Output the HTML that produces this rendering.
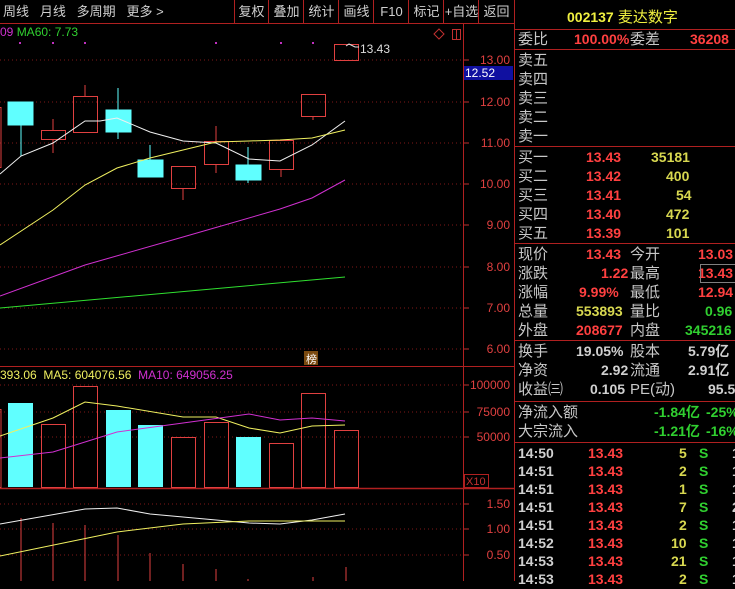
<!DOCTYPE html>
<html><head><meta charset="utf-8"><style>
*{margin:0;padding:0;box-sizing:border-box}
body{width:735px;height:581px;background:#000;overflow:hidden;position:relative;font-family:"Liberation Sans","Noto Sans CJK SC",sans-serif;color:#c0c0c0}
.a{position:absolute;white-space:nowrap}
.tb{position:absolute;top:0;height:23px;font-size:13px;color:#d0d0d0;line-height:23px}
.rp{position:absolute;left:514px;top:0;width:221px;height:581px;border-left:1px solid #b02020}
.hl{position:absolute;left:0;width:221px;height:1px;background:#b02020}
.r{position:absolute;left:3px;font-size:15px;line-height:19px;height:19px;width:218px}
.r span{position:absolute;top:0}
.lab{color:#c8c8c8}
.red{color:#ff4040}.yel{color:#d8d850}.grn{color:#30d030}.wht{color:#d0d0d0}
.n{font-weight:bold;font-size:14px}
</style></head><body>
<div class="tb" style="left:3px;width:230px;word-spacing:0">周线&nbsp;&nbsp; 月线&nbsp;&nbsp; 多周期&nbsp;&nbsp; 更多 &gt;</div>
<svg class="a" style="left:0;top:0" width="515" height="581">
<line x1="0" y1="23.5" x2="514" y2="23.5" stroke="#b02020"/>
<g stroke="#b02020"><line x1="234.5" y1="0" x2="234.5" y2="23"/><line x1="268.5" y1="0" x2="268.5" y2="23"/><line x1="303.5" y1="0" x2="303.5" y2="23"/><line x1="338.5" y1="0" x2="338.5" y2="23"/><line x1="373.5" y1="0" x2="373.5" y2="23"/><line x1="408.5" y1="0" x2="408.5" y2="23"/><line x1="443.5" y1="0" x2="443.5" y2="23"/><line x1="478.5" y1="0" x2="478.5" y2="23"/></g>
<line x1="463.5" y1="24" x2="463.5" y2="581" stroke="#b02020"/>
<line x1="0" y1="366.5" x2="514" y2="366.5" stroke="#b02020"/>
<line x1="0" y1="488.5" x2="514" y2="488.5" stroke="#b02020" stroke-width="1.5"/>
<g stroke="#801818" stroke-dasharray="1,3">
<line x1="0" y1="60" x2="463" y2="60"/><line x1="0" y1="102" x2="463" y2="102"/><line x1="0" y1="143" x2="463" y2="143"/><line x1="0" y1="184" x2="463" y2="184"/><line x1="0" y1="225" x2="463" y2="225"/><line x1="0" y1="267" x2="463" y2="267"/><line x1="0" y1="308" x2="463" y2="308"/><line x1="0" y1="349" x2="463" y2="349"/>
<line x1="0" y1="385" x2="463" y2="385"/><line x1="0" y1="412" x2="463" y2="412"/><line x1="0" y1="437" x2="463" y2="437"/>
<line x1="0" y1="504" x2="463" y2="504"/><line x1="0" y1="529" x2="463" y2="529"/><line x1="0" y1="555" x2="463" y2="555"/>
</g>
<g stroke="#c03030"><line x1="464" y1="60" x2="469" y2="60"/><line x1="464" y1="102" x2="469" y2="102"/><line x1="464" y1="143" x2="469" y2="143"/><line x1="464" y1="184" x2="469" y2="184"/><line x1="464" y1="225" x2="469" y2="225"/><line x1="464" y1="267" x2="469" y2="267"/><line x1="464" y1="308" x2="469" y2="308"/><line x1="464" y1="349" x2="469" y2="349"/><line x1="464" y1="385" x2="469" y2="385"/><line x1="464" y1="412" x2="469" y2="412"/><line x1="464" y1="437" x2="469" y2="437"/><line x1="464" y1="504" x2="469" y2="504"/><line x1="464" y1="529" x2="469" y2="529"/><line x1="464" y1="555" x2="469" y2="555"/></g>
<rect x="464" y="66" width="49" height="14" fill="#1010a0"/>
<g fill="#c030c0"><rect x="19" y="42" width="2" height="2"/><rect x="52" y="42" width="2" height="2"/><rect x="84" y="42" width="2" height="2"/><rect x="215" y="42" width="2" height="2"/><rect x="280" y="42" width="2" height="2"/><rect x="312" y="42" width="2" height="2"/></g>
<path d="M434 34 L439 29 L444 34 L439 39 Z" fill="none" stroke="#c03030"/>
<rect x="452.5" y="29.5" width="8" height="10" fill="none" stroke="#c03030"/><line x1="456.5" y1="30" x2="456.5" y2="39" stroke="#c03030"/>
<g stroke="#e04040" fill="none">
<rect x="-5" y="107.5" width="6" height="60"/>
<line x1="53" y1="119" x2="53" y2="130"/><line x1="53" y1="139" x2="53" y2="153"/><rect x="41.5" y="130.5" width="24" height="9"/>
<line x1="85" y1="85" x2="85" y2="96"/><rect x="73.5" y="96.5" width="24" height="36"/>
<rect x="171.5" y="166.5" width="24" height="22"/><line x1="183" y1="189" x2="183" y2="200"/>
<line x1="216" y1="126" x2="216" y2="141"/><rect x="204.5" y="141.5" width="24" height="23"/><line x1="216" y1="165" x2="216" y2="173"/>
<rect x="269.5" y="140.5" width="24" height="29"/><line x1="281" y1="170" x2="281" y2="177"/>
<rect x="301.5" y="94.5" width="24" height="22"/><line x1="313" y1="117" x2="313" y2="120"/>
<rect x="334.5" y="44.5" width="24" height="16"/>
</g>
<g fill="#60ffff" stroke="#60ffff">
<line x1="21" y1="125" x2="21" y2="156"/><rect x="8" y="102" width="25" height="23"/>
<line x1="118" y1="88" x2="118" y2="139"/><rect x="106" y="110" width="25" height="22"/>
<line x1="150" y1="145" x2="150" y2="160"/><rect x="138" y="160" width="25" height="17"/>
<line x1="248" y1="147" x2="248" y2="183"/><rect x="236" y="165" width="25" height="15"/>
</g>
<path d="M346 46 L349 44 L355 47 L359 47" stroke="#ddd" fill="none"/>
<polyline points="0,174 21,156 53,143 85,121 100,121 117,118 150,132 183,141 216,143 249,159 280,161 312,145 345,121" fill="none" stroke="#f0f0f0"/>
<polyline points="0,245 53,210 85,185 117,168 150,158 183,150 216,142 249,141 280,140 312,138 345,130" fill="none" stroke="#f0f060"/>
<polyline points="0,296 85,265 183,237 280,209 312,198 345,180" fill="none" stroke="#d030d0"/>
<polyline points="0,308 345,277" fill="none" stroke="#30e030"/>
<rect x="304" y="351" width="14" height="14" fill="#7a4a10"/>
<g fill="#60ffff"><rect x="8" y="403" width="25" height="84"/><rect x="106" y="410" width="25" height="77"/><rect x="138" y="425" width="25" height="62"/><rect x="236" y="437" width="25" height="50"/></g>
<g fill="none" stroke="#e04040"><rect x="-5" y="409.5" width="6" height="78"/><rect x="41.5" y="424.5" width="24" height="63"/><rect x="73.5" y="386.5" width="24" height="101"/><rect x="171.5" y="437.5" width="24" height="50"/><rect x="204.5" y="422.5" width="24" height="65"/><rect x="269.5" y="443.5" width="24" height="44"/><rect x="301.5" y="393.5" width="24" height="94"/><rect x="334.5" y="430.5" width="24" height="57"/></g>
<polyline points="0,436 53,418 85,402 117,406 183,417 216,417 249,428 280,433 312,426 345,425" fill="none" stroke="#f0f060"/>
<polyline points="0,458 53,452 117,432 183,423 249,414 280,420 312,418 345,421" fill="none" stroke="#d030d0"/>
<rect x="464.5" y="474.5" width="24" height="13" fill="none" stroke="#b02020"/>
<g stroke="#e04040"><line x1="21" y1="518" x2="21" y2="581"/><line x1="53" y1="523" x2="53" y2="581"/><line x1="85" y1="525" x2="85" y2="581"/><line x1="118" y1="535" x2="118" y2="581"/><line x1="150" y1="553" x2="150" y2="581"/><line x1="183" y1="564" x2="183" y2="581"/><line x1="216" y1="569" x2="216" y2="581"/><line x1="248" y1="579" x2="248" y2="581"/><line x1="313" y1="577" x2="313" y2="581"/><line x1="346" y1="567" x2="346" y2="581"/></g>
<polyline points="0,524 85,509 117,508 150,514 183,517 249,523 280,524 312,520 345,514" fill="none" stroke="#f0f0f0"/>
<polyline points="0,556 117,532 183,524 249,521 345,521" fill="none" stroke="#f0f060"/>
</svg>
<div class="tb" style="left:234px;width:35px;text-align:center">复权</div>
<div class="tb" style="left:269px;width:35px;text-align:center">叠加</div>
<div class="tb" style="left:304px;width:35px;text-align:center">统计</div>
<div class="tb" style="left:339px;width:35px;text-align:center">画线</div>
<div class="tb" style="left:374px;width:35px;text-align:center">F10</div>
<div class="tb" style="left:409px;width:35px;text-align:center">标记</div>
<div class="tb" style="left:444px;width:35px;text-align:center">+自选</div>
<div class="tb" style="left:479px;width:35px;text-align:center">返回</div>
<div class="a" style="left:0;top:25px;font-size:12px;color:#d030d0">09 <span style="color:#30d030">MA60: 7.73</span></div>
<div class="a" style="left:360px;top:42px;font-size:12px;color:#ddd">13.43</div>
<div class="a" style="left:306px;top:351px;font-size:11px;color:#fff">榜</div>
<div class="a" style="left:0;top:368px;font-size:12px;color:#f0f060">393.06&nbsp; MA5: 604076.56&nbsp; <span style="color:#d030d0">MA10: 649056.25</span></div>
<div class="a" style="left:466px;top:476px;font-size:11px;color:#c03030">X10</div>
<div class="a" style="left:465px;top:66px;font-size:12px;color:#fff">12.52</div>
<div class="a" style="left:470px;top:0;width:40px;text-align:right;font-size:12px;color:#e04040;line-height:14px">
<div style="position:absolute;right:0;top:53px">13.00</div>
<div style="position:absolute;right:0;top:95px">12.00</div><div style="position:absolute;right:0;top:136px">11.00</div><div style="position:absolute;right:0;top:177px">10.00</div><div style="position:absolute;right:0;top:218px">9.00</div><div style="position:absolute;right:0;top:260px">8.00</div><div style="position:absolute;right:0;top:301px">7.00</div><div style="position:absolute;right:0;top:342px">6.00</div>
<div style="position:absolute;right:0;top:378px">100000</div><div style="position:absolute;right:0;top:405px">75000</div><div style="position:absolute;right:0;top:430px">50000</div>
<div style="position:absolute;right:0;top:497px">1.50</div><div style="position:absolute;right:0;top:522px">1.00</div><div style="position:absolute;right:0;top:548px">0.50</div>
</div>
<div class="rp">
<div class="a" style="left:52px;top:6px;font-size:15px;color:#f0f040"><b style="font-size:14px">002137</b> 麦达数字</div>
<div class="hl" style="top:29px"></div>
<div class="r" style="top:30px"><span class="lab" style="left:0">委比</span><span class="red n" style="left:56px">100.00%</span><span class="lab" style="left:112px">委差</span><span class="red n" style="left:172px">36208</span></div>
<div class="hl" style="top:49px"></div>
<div class="r lab" style="top:51px">卖五</div><div class="r lab" style="top:70px">卖四</div><div class="r lab" style="top:89px">卖三</div><div class="r lab" style="top:108px">卖二</div><div class="r lab" style="top:127px">卖一</div>
<div class="hl" style="top:146px"></div>
<div class="r" style="top:148px"><span class="lab">买一</span><span class="red n" style="left:68px">13.43</span><span class="yel n" style="left:133px">35181</span></div>
<div class="r" style="top:167px"><span class="lab">买二</span><span class="red n" style="left:68px">13.42</span><span class="yel n" style="left:148px">400</span></div>
<div class="r" style="top:186px"><span class="lab">买三</span><span class="red n" style="left:68px">13.41</span><span class="yel n" style="left:158px">54</span></div>
<div class="r" style="top:205px"><span class="lab">买四</span><span class="red n" style="left:68px">13.40</span><span class="yel n" style="left:148px">472</span></div>
<div class="r" style="top:224px"><span class="lab">买五</span><span class="red n" style="left:68px">13.39</span><span class="yel n" style="left:148px">101</span></div>
<div class="hl" style="top:243px"></div>
<div class="r" style="top:245px"><span class="lab">现价</span><span class="red n" style="left:68px">13.43</span><span class="lab" style="left:112px">今开</span><span class="red n" style="left:180px">13.03</span></div>
<div class="r" style="top:264px"><span class="lab">涨跌</span><span class="red n" style="left:83px">1.22</span><span class="lab" style="left:112px">最高</span><span class="red n" style="left:180px">13.43</span></div>
<div class="a" style="left:185px;top:264px;width:40px;height:19px;border:1px solid #808080"></div>
<div class="r" style="top:283px"><span class="lab">涨幅</span><span class="red n" style="left:61px">9.99%</span><span class="lab" style="left:112px">最低</span><span class="red n" style="left:180px">12.94</span></div>
<div class="r" style="top:302px"><span class="lab">总量</span><span class="yel n" style="left:58px">553893</span><span class="lab" style="left:112px">量比</span><span class="grn n" style="left:187px">0.96</span></div>
<div class="r" style="top:321px"><span class="lab">外盘</span><span class="red n" style="left:58px">208677</span><span class="lab" style="left:112px">内盘</span><span class="grn n" style="left:167px">345216</span></div>
<div class="hl" style="top:340px"></div>
<div class="r" style="top:342px"><span class="lab">换手</span><span class="wht n" style="left:58px">19.05%</span><span class="lab" style="left:112px">股本</span><span class="wht n" style="left:170px">5.79亿</span></div>
<div class="r" style="top:361px"><span class="lab">净资</span><span class="wht n" style="left:83px">2.92</span><span class="lab" style="left:112px">流通</span><span class="wht n" style="left:170px">2.91亿</span></div>
<div class="r" style="top:380px"><span class="lab">收益㈢</span><span class="wht n" style="left:72px">0.105</span><span class="lab" style="left:112px">PE(动)</span><span class="wht n" style="left:190px">95.5</span></div>
<div class="hl" style="top:401px"></div>
<div class="r" style="top:403px"><span class="lab">净流入额</span><span class="grn n" style="left:136px">-1.84亿</span><span class="grn n" style="left:188px">-25%</span></div>
<div class="r" style="top:422px"><span class="lab">大宗流入</span><span class="grn n" style="left:136px">-1.21亿</span><span class="grn n" style="left:188px">-16%</span></div>
<div class="hl" style="top:442px"></div>
<div class="r" style="top:444px"><span class="wht n">14:50</span><span class="red n" style="left:70px">13.43</span><span class="yel n" style="left:161px">5</span><span class="grn n" style="left:181px">S</span><span class="wht n" style="left:214px">1</span></div>
<div class="r" style="top:462px"><span class="wht n">14:51</span><span class="red n" style="left:70px">13.43</span><span class="yel n" style="left:161px">2</span><span class="grn n" style="left:181px">S</span><span class="wht n" style="left:214px">1</span></div>
<div class="r" style="top:480px"><span class="wht n">14:51</span><span class="red n" style="left:70px">13.43</span><span class="yel n" style="left:161px">1</span><span class="grn n" style="left:181px">S</span><span class="wht n" style="left:214px">1</span></div>
<div class="r" style="top:498px"><span class="wht n">14:51</span><span class="red n" style="left:70px">13.43</span><span class="yel n" style="left:161px">7</span><span class="grn n" style="left:181px">S</span><span class="wht n" style="left:214px">2</span></div>
<div class="r" style="top:516px"><span class="wht n">14:51</span><span class="red n" style="left:70px">13.43</span><span class="yel n" style="left:161px">2</span><span class="grn n" style="left:181px">S</span><span class="wht n" style="left:214px">1</span></div>
<div class="r" style="top:534px"><span class="wht n">14:52</span><span class="red n" style="left:70px">13.43</span><span class="yel n" style="left:153px">10</span><span class="grn n" style="left:181px">S</span><span class="wht n" style="left:214px">1</span></div>
<div class="r" style="top:552px"><span class="wht n">14:53</span><span class="red n" style="left:70px">13.43</span><span class="yel n" style="left:153px">21</span><span class="grn n" style="left:181px">S</span><span class="wht n" style="left:214px">1</span></div>
<div class="r" style="top:570px"><span class="wht n">14:53</span><span class="red n" style="left:70px">13.43</span><span class="yel n" style="left:161px">2</span><span class="grn n" style="left:181px">S</span><span class="wht n" style="left:214px">1</span></div>
</div>
</body></html>
